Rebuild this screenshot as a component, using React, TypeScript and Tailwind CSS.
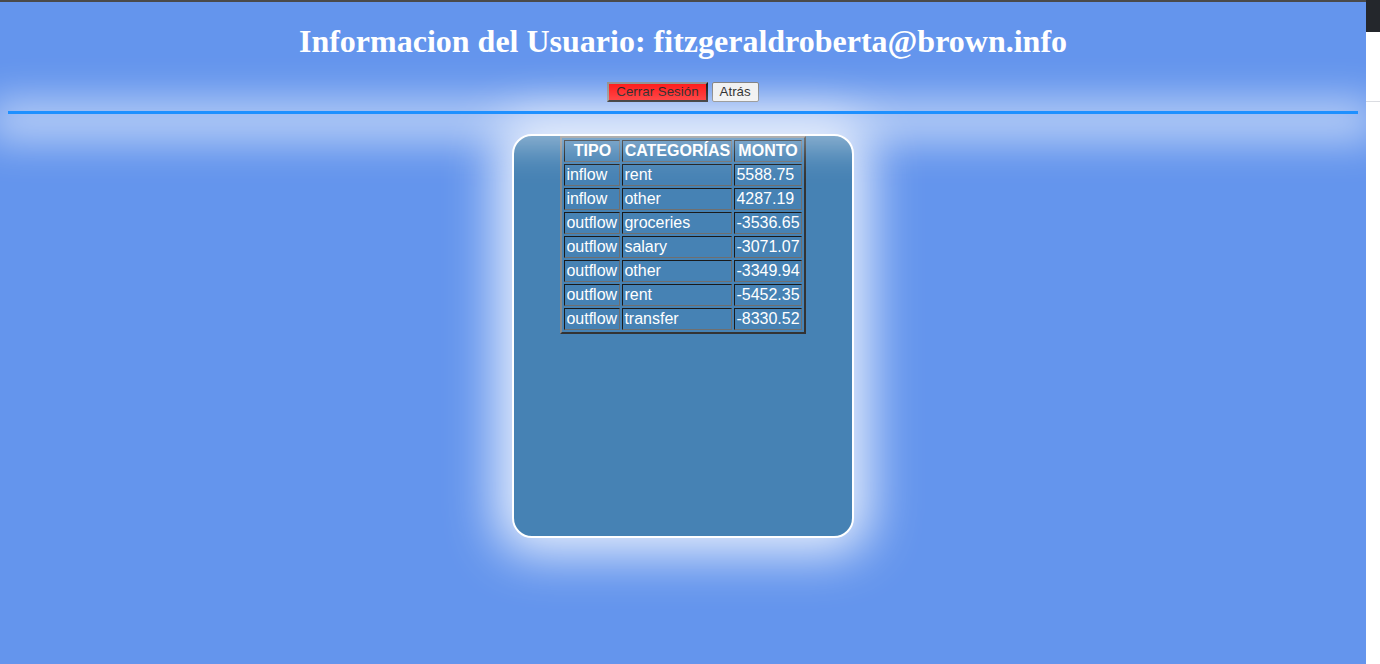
import React from 'react';

const rows = [
  { tipo: 'inflow', cat: 'rent', monto: '5588.75' },
  { tipo: 'inflow', cat: 'other', monto: '4287.19' },
  { tipo: 'outflow', cat: 'groceries', monto: '-3536.65' },
  { tipo: 'outflow', cat: 'salary', monto: '-3071.07' },
  { tipo: 'outflow', cat: 'other', monto: '-3349.94' },
  { tipo: 'outflow', cat: 'rent', monto: '-5452.35' },
  { tipo: 'outflow', cat: 'transfer', monto: '-8330.52' },
];

const cell = 'border border-[#6f6f6f] [border-style:inset] px-[1px] py-[1px] leading-[18px]';

const App: React.FC = () => {
  return (
    <div className="flex h-[664px] w-[1380px] overflow-hidden">
      <div className="w-[1366px] h-full bg-[#6495ed] border-t-2 border-[#4a4a4a] font-['Liberation_Sans',Arial,sans-serif]">
        <h1 className="mt-[21px] mb-[23px] text-center text-[32px] font-bold text-white font-['Liberation_Serif','Times_New_Roman',serif] leading-[36px]">
          Informacion del Usuario: fitzgeraldroberta@brown.info
        </h1>
        <div className="flex justify-center gap-[4px] h-[20px]">
          <button className="h-[20px] px-[7px] bg-[#ff0000] text-black text-[13.33px] border-2 border-[#333] [border-style:outset] leading-[14px]">
            Cerrar Sesión
          </button>
          <button className="h-[20px] px-[7px] bg-[#efefef] text-black text-[13.33px] border border-[#767676] rounded-[2px] leading-[14px]">
            Atrás
          </button>
        </div>
        <hr className="relative z-10 mx-[8px] mt-[9px] mb-[20px] border-t-[3px] border-[#1e90ff] shadow-[0_8px_40px_18px_rgba(255,255,255,0.6)]" />
        <div className="mx-auto w-[342px] h-[404px] rounded-[20px] border-2 border-white bg-[#4682b4] shadow-[0_0_50px_16px_rgba(255,255,255,0.85)]">
          <table className="mx-auto border-separate border-spacing-[2px] border-2 border-t-[#8a8a8a] border-l-[#8a8a8a] border-r-[#333] border-b-[#333] text-white text-[16px]">
            <thead>
              <tr>
                <th className={cell + ' w-[56px] text-center'}>TIPO</th>
                <th className={cell + ' w-[110px] text-center'}>CATEGORÍAS</th>
                <th className={cell + ' w-[65px] text-center'}>MONTO</th>
              </tr>
            </thead>
            <tbody>
              {rows.map((r, i) => (
                <tr key={i}>
                  <td className={cell + ' text-left'}>{r.tipo}</td>
                  <td className={cell + ' text-left'}>{r.cat}</td>
                  <td className={cell + ' text-left'}>{r.monto}</td>
                </tr>
              ))}
            </tbody>
          </table>
        </div>
      </div>
      <div className="w-[14px] h-full bg-white">
        <div className="h-[32px] bg-[#24272c]" />
        <div className="mt-[69px] h-px bg-[#d4d6dc]" />
      </div>
    </div>
  );
};

export default App;
